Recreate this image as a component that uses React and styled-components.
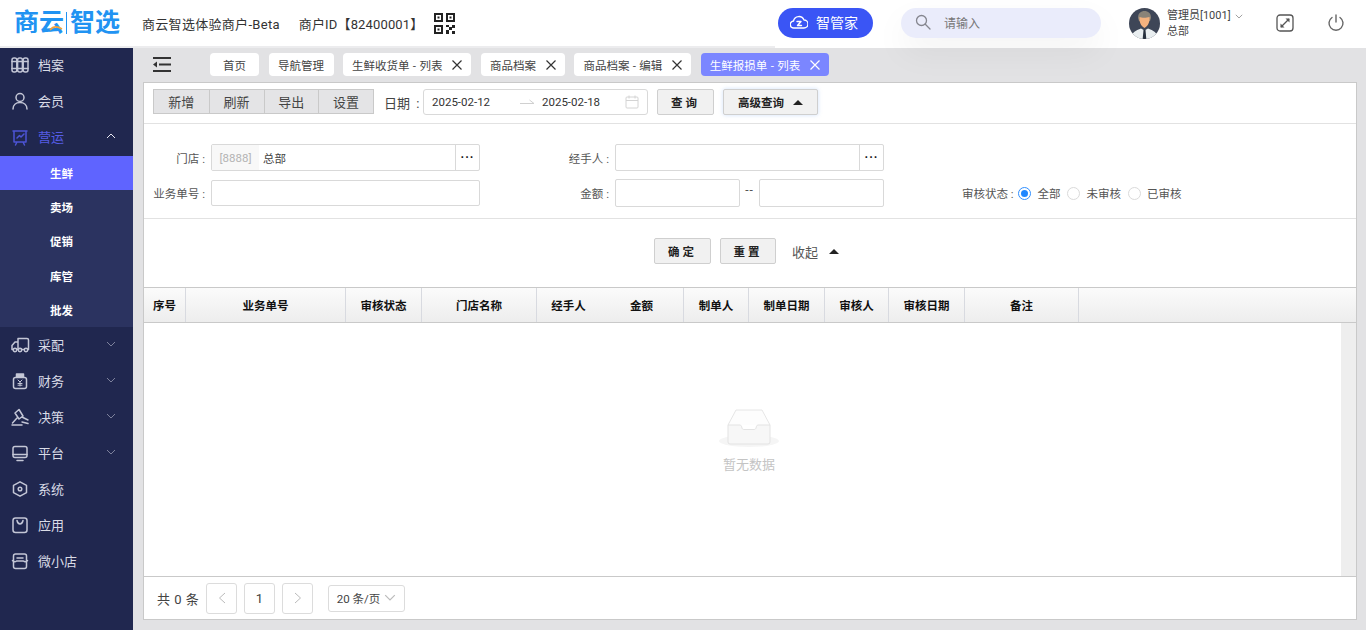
import React from "react";
import styled, { createGlobalStyle } from "styled-components";

const Global = createGlobalStyle`
  html, body { margin: 0; padding: 0; height: 100%; background: #e2e2e4; }
  body { font-family: Roboto, "Noto Sans CJK SC", sans-serif; font-size: 12px; color: #333; overflow: hidden; }
  * { box-sizing: border-box; }
`;

const Page = styled.div`
  width: 1366px;
  height: 630px;
  display: flex;
  flex-direction: column;
  overflow: hidden;
`;

const Header = styled.header`
  height: 48px;
  flex: none;
  display: flex;
  background: #fff;
  position: relative;
  z-index: 2;
`;
const HeaderLeft = styled.div`
  width: 775px;
  flex: none;
  display: flex;
  align-items: center;
  padding-left: 14px;
  border-bottom: 2px solid #ececee;
  font-size: 13px;
  color: #333;
`;
const Logo = styled.div`
  width: 106px;
  position: relative;
  display: flex;
  align-items: center;
  font-size: 25px;
  line-height: 30px;
  font-weight: 700;
  color: #2193f2;
  white-space: nowrap;
`;
const LogoBar = styled.i`
  width: 1px;
  height: 22px;
  margin: 0 3px 0 2px;
  background: #2193f2;
`;
const LogoSwoosh = styled.svg`
  position: absolute;
  left: 35px;
  top: 17px;
`;
const HeaderText = styled.span`
  margin-left: ${(p) => p.$gap}px;
  letter-spacing: ${(p) => p.$ls}px;
  white-space: nowrap;
`;
const QrWrap = styled.div`
  margin-left: 11px;
  display: flex;
`;
const HeaderRight = styled.div`
  flex: 1;
  display: flex;
  align-items: center;
  padding: 0 0 2px 3px;
`;
const SmartBtn = styled.div`
  width: 95px;
  height: 30px;
  border-radius: 15px;
  background: #3a55f5;
  color: #fff;
  font-size: 14px;
  display: flex;
  align-items: center;
  padding: 0 0 2px 12px;
  gap: 8px;
`;
const Search = styled.div`
  width: 200px;
  height: 30px;
  margin-left: 28px;
  border-radius: 15px;
  background: #eaecfb;
  color: #777;
  display: flex;
  align-items: center;
  padding: 0 0 2px 14px;
  gap: 13px;
  box-shadow: 0 14px 34px rgba(0, 0, 0, 0.05);
`;
const AvatarWrap = styled.div`
  margin-left: 28px;
  display: flex;
`;
const UserInfo = styled.div`
  margin-left: 7px;
  width: 78px;
  padding-top: 2px;
  font-size: 11px;
  line-height: 16px;
  color: #444;
`;
const UserName = styled.div`
  display: flex;
  align-items: center;
  gap: 4px;
  white-space: nowrap;
`;
const HeaderIcon = styled.div`
  margin-left: ${(p) => p.$gap}px;
  display: flex;
`;

const Body = styled.div`
  flex: 1;
  display: flex;
  min-height: 0;
`;
const Sidebar = styled.nav`
  width: 133px;
  flex: none;
  background: #20274f;
`;
const NavRow = styled.div`
  height: 36px;
  display: flex;
  align-items: center;
  padding: 0 17px ${(p) => (p.$low ? 2 : 4)}px 10px;
  font-size: 13px;
  color: ${(p) => (p.$active ? "#565de6" : "#d9dbe6")};
`;
const NavIcon = styled.span`
  width: 20px;
  height: 20px;
  display: flex;
  align-items: center;
  justify-content: center;
  margin-right: 8px;
  margin-top: 2px;
  color: ${(p) => (p.$active ? "#4c54d6" : "#c3c6d6")};
`;
const NavLabel = styled.span`
  flex: 1;
`;
const SubMenu = styled.div`
  background: #2b3360;
  height: 171px;
`;
const SubRow = styled.div`
  height: 34.2px;
  display: flex;
  align-items: center;
  padding-left: 50px;
  font-size: 11.5px;
  font-weight: 700;
  color: #fff;
  background: ${(p) => (p.$active ? "#5f64ff" : "transparent")};
`;

const Content = styled.main`
  flex: 1;
  min-width: 0;
  display: flex;
  flex-direction: column;
  padding: 5px 9px 10px 10px;
`;
const TabBar = styled.div`
  height: 23px;
  flex: none;
  display: flex;
  align-items: center;
  gap: 9.5px;
  margin-bottom: 6px;
`;
const Collapse = styled.div`
  width: 58px;
  padding-left: 10px;
  margin-right: -0.5px;
  display: flex;
`;
const Tab = styled.div`
  height: 23px;
  ${(p) => (p.$width ? `width: ${p.$width}px; justify-content: center;` : "padding: 0 9px;")}
  border-radius: 4px;
  background: ${(p) => (p.$active ? "#7b86ff" : "#fff")};
  color: ${(p) => (p.$active ? "#fff" : "#444")};
  font-size: 11.5px;
  word-spacing: 0.5px;
  display: flex;
  align-items: center;
  white-space: nowrap;
  gap: 10px;
`;

const Panel = styled.section`
  flex: 1;
  min-height: 0;
  display: flex;
  flex-direction: column;
  background: #fff;
  border: 1px solid #c9c9c9;
`;
const Toolbar = styled.div`
  height: 41px;
  flex: none;
  display: flex;
  align-items: center;
  padding: 0 0 2px 9px;
  border-bottom: 1px solid #e2e2e2;
`;
const BtnGroup = styled.div`
  display: flex;
  height: 25px;
  margin-bottom: 1px;
  border: 1px solid #c9c9c9;
  background: #e4e4e6;
`;
const GroupBtn = styled.div`
  width: 54.75px;
  display: flex;
  align-items: center;
  justify-content: center;
  font-size: 13px;
  color: #444;
  & + & { border-left: 1px solid #c9c9c9; }
`;
const DateLabel = styled.span`
  font-size: 13px;
  margin-left: 10px;
  width: 39px;
  color: #444;
  word-spacing: 3px;
  white-space: nowrap;
`;
const DateRange = styled.div`
  width: 225px;
  height: 26px;
  border: 1px solid #d9d9d9;
  border-radius: 3px;
  display: flex;
  align-items: center;
  padding: 0 8px;
  font-size: 11.5px;
  color: #333;
`;
const DateValue = styled.span`
  width: 88px;
`;
const ArrowBox = styled.span`
  width: 22px;
  display: flex;
`;
const DateEnd = styled.span`
  flex: 1;
`;
const ActionBtn = styled.div`
  height: ${(p) => p.$h || 26}px;
  width: ${(p) => p.$w}px;
  margin-left: ${(p) => p.$gap}px;
  border: 1px solid #cfcfcf;
  border-radius: 2px;
  background: #f1f1f1;
  display: flex;
  align-items: center;
  justify-content: center;
  gap: 9px;
  font-size: 11.5px;
  font-weight: 700;
  color: #222;
  letter-spacing: ${(p) => (p.$spaced ? "3px" : "0")};
  box-shadow: ${(p) => (p.$glow ? "0 0 4px rgba(120,170,240,.35)" : "none")};
`;
const Triangle = styled.i`
  width: 0;
  height: 0;
  border-left: 5px solid transparent;
  border-right: 5px solid transparent;
  border-bottom: 5px solid #222;
`;

const FilterGrid = styled.div`
  flex: none;
  height: 95px;
  padding-top: 20px;
  display: grid;
  grid-template-columns: 67px 269px 135px 269px 1fr;
  grid-template-rows: 27px 28px;
  row-gap: 8px;
  border-bottom: 1px solid #e2e2e2;
`;
const Label = styled.label`
  display: flex;
  align-items: center;
  justify-content: flex-end;
  padding-right: 6px;
  font-size: 11.5px;
  color: #555;
  white-space: nowrap;
`;
const Input = styled.div`
  height: ${(p) => p.$h || 27}px;
  align-self: center;
  width: ${(p) => (p.$w ? `${p.$w}px` : "100%")};
  border: 1px solid #d9d9d9;
  border-radius: 2px;
  background: #fff;
  display: flex;
  overflow: hidden;
`;
const Prefix = styled.span`
  width: 47px;
  background: #f8f8f8;
  color: #b4b4b4;
  font-size: 11.5px;
  display: flex;
  align-items: center;
  justify-content: center;
`;
const InputValue = styled.span`
  flex: 1;
  display: flex;
  align-items: center;
  padding-left: 4px;
  font-size: 11.5px;
  color: #444;
`;
const Dots = styled.span`
  width: 24px;
  border-left: 1px solid #d9d9d9;
  display: flex;
  align-items: center;
  justify-content: center;
  font-weight: 700;
  font-size: 12px;
  letter-spacing: 1px;
  color: #111;
`;
const RangeCell = styled.div`
  display: flex;
  align-items: center;
`;
const RangeSep = styled.span`
  width: 19px;
  text-align: center;
  font-size: 12px;
  letter-spacing: 1px;
  color: #555;
  margin-bottom: 6px;
`;
const StatusCell = styled.div`
  display: flex;
  align-items: center;
  padding-left: 78px;
  font-size: 11.5px;
  color: #555;
  white-space: nowrap;
`;
const StatusLabel = styled.span`
  width: 56px;
`;
const Radio = styled.i`
  width: 13px;
  height: 13px;
  flex: none;
  border-radius: 50%;
  border: 1px solid ${(p) => (p.$on ? "#2f8fff" : "#dadada")};
  background: #fff;
  display: flex;
  align-items: center;
  justify-content: center;
  &::after {
    content: "";
    display: ${(p) => (p.$on ? "block" : "none")};
    width: 7px;
    height: 7px;
    border-radius: 50%;
    background: #1f87ff;
  }
`;
const RadioText = styled.span`
  margin-left: 6.5px;
  margin-right: 6.5px;
`;

const Actions = styled.div`
  flex: none;
  height: 68px;
  display: flex;
  align-items: flex-start;
  padding: 19px 0 0 510px;
`;
const CollapseText = styled.div`
  margin-left: 16px;
  height: 26px;
  display: flex;
  align-items: center;
  gap: 11px;
  font-size: 13px;
  color: #555;
`;

const TableHead = styled.div`
  flex: none;
  height: 36px;
  display: grid;
  grid-template-columns: 42px 160px 76px 115px 63px 84px 65px 76px 64px 76px 114px 1fr;
  border-top: 1px solid #c9c9c9;
  border-bottom: 1px solid #c9c9c9;
  background: linear-gradient(#fbfbfb, #ededed);
`;
const HeadCell = styled.div`
  display: flex;
  align-items: center;
  justify-content: center;
  font-size: 11.5px;
  font-weight: 700;
  color: #111;
  border-right: ${(p) => (p.$plain ? "none" : "1px solid #d8dae0")};
`;
const TableBody = styled.div`
  flex: 1;
  min-height: 0;
  position: relative;
  display: flex;
  flex-direction: column;
  align-items: center;
  padding: 86px 2px 0 0;
  border-bottom: 1px solid #c9c9c9;
`;
const ScrollTrack = styled.div`
  position: absolute;
  top: 0;
  right: 0;
  bottom: 0;
  width: 15px;
  background: #eeeeee;
`;
const EmptyText = styled.div`
  margin-top: 7px;
  font-size: 13px;
  color: #c4c4c4;
`;
const Footer = styled.div`
  flex: none;
  height: 42px;
  display: flex;
  align-items: center;
  padding-left: 13px;
`;
const Total = styled.span`
  font-size: 13px;
  color: #444;
  width: 49px;
  word-spacing: 1px;
  white-space: nowrap;
`;
const PageBtn = styled.div`
  width: 31px;
  height: 31px;
  margin-right: 7px;
  border: 1px solid #dcdcdc;
  border-radius: 3px;
  display: flex;
  align-items: center;
  justify-content: center;
  font-size: 13px;
  color: #444;
`;
const PageSize = styled.div`
  width: 77px;
  height: 27px;
  margin-left: 8px;
  border: 1px solid #dcdcdc;
  border-radius: 3px;
  display: flex;
  align-items: center;
  justify-content: center;
  gap: 4px;
  font-size: 11.5px;
  color: #444;
`;

const Svg = ({ s = 20, children }) => (
  <svg width={s} height={s} viewBox={`0 0 ${s} ${s}`} fill="none" stroke="currentColor" strokeWidth={1.5} strokeLinecap="round" strokeLinejoin="round">
    {children}
  </svg>
);

const icons = {
  archive: (
    <Svg>
      <rect x="2" y="3" width="4.800" height="14" rx="2" />
      <rect x="7.600" y="3" width="4.800" height="14" rx="2" />
      <rect x="13.200" y="3" width="4.800" height="14" rx="2" />
      <path d="M2 6.500h4.800M7.600 6.500h4.800M13.200 6.500h4.800M2 13.500h4.800M7.600 13.500h4.800M13.200 13.500h4.800" />
    </Svg>
  ),
  user: (
    <Svg>
      <circle cx="10" cy="6.500" r="4" />
      <path d="M3 18c0-4 3-6.500 7-6.500s7 2.500 7 6.500" />
    </Svg>
  ),
  ops: (
    <Svg>
      <path d="M3 4h14M4 4v11h12V4M7 15l-1.500 3M13 15l1.500 3" />
      <path d="M7 11l2.500-2.500 1.500 1.500L14 7" />
    </Svg>
  ),
  truck: (
    <Svg>
      <path d="M8 3.500h9a1.500 1.500 0 0 1 1.500 1.500v9.500H18M8 3.500V14M8 7H5L2 10.500v4h1M7 14.500h1.500M11.500 14.500H14" />
      <circle cx="5" cy="15" r="1.700" />
      <circle cx="10" cy="15" r="1.700" />
      <circle cx="16" cy="15" r="1.700" />
    </Svg>
  ),
  finance: (
    <Svg>
      <path d="M6.500 3h7v3h-7z" fill="currentColor" />
      <rect x="3.500" y="6.500" width="13" height="11" rx="2" />
      <path d="M8 9l2 2 2-2M10 11v4M8 12.500h4M8 14.200h4" strokeWidth="1" />
    </Svg>
  ),
  gavel: (
    <Svg>
      <path d="M9 2.500l4 6.500-4 3-4-6zM7 11l-4.500 5M12 10l6 3" />
      <path d="M2 18h10" />
      <path d="M12 15l6 1.500" />
    </Svg>
  ),
  monitor: (
    <Svg>
      <rect x="3" y="3.500" width="14" height="11" rx="2" />
      <path d="M3 11.500h14M7 17.500h6" />
    </Svg>
  ),
  system: (
    <Svg>
      <path d="M10 2.800l6.500 3.600v7.200L10 17.200 3.500 13.600V6.400z" />
      <circle cx="10" cy="10" r="1.800" />
    </Svg>
  ),
  app: (
    <Svg>
      <rect x="3" y="3" width="14" height="14.500" rx="2.500" />
      <path d="M7 5.500c.5 2.500 1.500 3.500 3 3.500s2.500-1 3-3.500" />
    </Svg>
  ),
  shop: (
    <Svg>
      <rect x="3.500" y="3" width="13" height="14.500" rx="2" />
      <path d="M2.500 9.500c1.500 1.500 3 1.500 4 .5h7c1 1 2.500 1 4-.5M7 7h6" />
    </Svg>
  ),
};

const Chevron = ({ up, color = "#7d819c", s = 10 }) => (
  <svg width={s} height={s * 0.6} viewBox="0 0 10 6" fill="none" stroke={color} strokeWidth="1">
    <path d={up ? "M1 5l4-4 4 4" : "M1 1l4 4 4-4"} />
  </svg>
);

const Close = ({ color = "#333" }) => (
  <svg width="10" height="10" viewBox="0 0 10 10" stroke={color} strokeWidth="1.200" fill="none">
    <path d="M.5.5l9 9M9.500.5l-9 9" />
  </svg>
);

const Qr = () => (
  <svg width="21" height="21" viewBox="0 0 21 21" fill="#222">
    <path fillRule="evenodd" d="M0 0h9v9H0zM2 2v5h5V2zM12 0h9v9h-9zM14 2v5h5V2zM0 12h9v9H0zM2 14v5h5v-5z" />
    <path d="M3.500 3.500h2v2h-2zM15.500 3.500h2v2h-2zM3.500 15.500h2v2h-2zM12 12h3v2h-3zM18 12h3v3h-3zM15 14h3v3h-3zM12 17h3v4h-3zM18 18h3v3h-3z" />
  </svg>
);

const Avatar = () => (
  <svg width="31" height="31" viewBox="0 0 31 31">
    <defs>
      <clipPath id="avatarClip"><circle cx="15.500" cy="15.500" r="15.500" /></clipPath>
    </defs>
    <g clipPath="url(#avatarClip)">
      <rect width="31" height="31" fill="#3e4657" />
      <path d="M9 10c0-5 3-7 6.500-7S22 5 22 10l-1 3H10z" fill="#8a8378" />
      <path d="M10.500 9c2 1 7 1 10 0 .5 4-1 9-5 11-4-2-5.500-7-5-11z" fill="#f4b27f" />
      <path d="M2 31c0-6 5-9 10-10.500l3.500 2 3.500-2C24 22 29 25 29 31z" fill="#e9eef0" />
      <path d="M14.500 22h2l.8 9h-3.600z" fill="#27303e" />
    </g>
  </svg>
);

const EmptyIcon = () => (
  <svg width="60" height="38" viewBox="0 0 60 38">
    <ellipse cx="30" cy="32" rx="30" ry="6" fill="#f5f5f5" />
    <path d="M9 16L17 1h26l8 15" fill="#fdfdfd" stroke="#e6e6e6" />
    <path d="M9 16h12c1 0 1.500 1 2 3 .3 1 1 1.500 2 1.500h10c1 0 1.700-.5 2-1.500.5-2 1-3 2-3h12v17a2 2 0 0 1-2 2H11a2 2 0 0 1-2-2z" fill="#f7f7f7" stroke="#e3e3e3" />
  </svg>
);

const navTop = [
  ["archive", "档案"],
  ["user", "会员"],
];
const subs = ["生鲜", "卖场", "促销", "库管", "批发"];
const navBottom = [
  ["truck", "采配", true],
  ["finance", "财务", true],
  ["gavel", "决策", true],
  ["monitor", "平台", true],
  ["system", "系统"],
  ["app", "应用"],
  ["shop", "微小店"],
];
const tabs = [
  { t: "首页", w: 49 },
  { t: "导航管理", w: 65 },
  { t: "生鲜收货单 - 列表", c: 1 },
  { t: "商品档案", c: 1 },
  { t: "商品档案 - 编辑", c: 1 },
  { t: "生鲜报损单 - 列表", c: 1, a: 1 },
];
const columns = ["序号", "业务单号", "审核状态", "门店名称", "经手人", "金额", "制单人", "制单日期", "审核人", "审核日期", "备注", ""];

export default function App() {
  return (
    <Page>
      <Global />
      <Header>
        <HeaderLeft>
          <Logo>
            商云<LogoBar />智选
            <LogoSwoosh width="14" height="6" viewBox="0 0 14 6" fill="none" stroke="#f2a33a" strokeWidth="1.500">
              <path d="M1 5c3-4 7-4 12-1" />
            </LogoSwoosh>
          </Logo>
          <HeaderText $gap={22} $ls={0.3}>商云智选体验商户-Beta</HeaderText>
          <HeaderText $gap={19} $ls={0.15}>商户ID【82400001】</HeaderText>
          <QrWrap><Qr /></QrWrap>
        </HeaderLeft>
        <HeaderRight>
          <SmartBtn>
            <svg width="18" height="14" viewBox="0 0 18 14" fill="none" stroke="#fff" strokeWidth="1.400" strokeLinejoin="round" strokeLinecap="round">
              <path d="M5 13H4a3.500 3.500 0 0 1-.5-7A5.500 5.500 0 0 1 14 5a4 4 0 0 1 0 8H5z" />
              <path d="M7 6.500h4L7.500 10.500h4" />
            </svg>
            智管家
          </SmartBtn>
          <Search>
            <svg width="16" height="16" viewBox="0 0 16 16" fill="none" stroke="#85868f" strokeWidth="1.300" strokeLinecap="round">
              <circle cx="6.500" cy="6.500" r="5" />
              <path d="M10.300 10.300L15 15" />
            </svg>
            请输入
          </Search>
          <AvatarWrap><Avatar /></AvatarWrap>
          <UserInfo>
            <UserName>管理员[1001] <Chevron color="#888" s={8} /></UserName>
            <div>总部</div>
          </UserInfo>
          <HeaderIcon $gap={31}>
            <svg width="18" height="18" viewBox="0 0 18 18" fill="none" stroke="#555" strokeWidth="1.300">
              <rect x="1" y="1" width="16" height="16" rx="3" />
              <path d="M5 13l8-8" strokeWidth="1.200" />
              <path d="M9.500 4.500h4v4zM4.500 9.500v4h4z" fill="#555" stroke="none" />
            </svg>
          </HeaderIcon>
          <HeaderIcon $gap={33}>
            <svg width="18" height="18" viewBox="0 0 18 18" fill="none" stroke="#666" strokeWidth="1.400" strokeLinecap="round">
              <path d="M5 3.500a7 7 0 1 0 8 0M9 1v7" />
            </svg>
          </HeaderIcon>
        </HeaderRight>
      </Header>
      <Body>
        <Sidebar>
          {navTop.map(([i, t]) => (
            <NavRow key={t}>
              <NavIcon>{icons[i]}</NavIcon>
              <NavLabel>{t}</NavLabel>
            </NavRow>
          ))}
          <NavRow $active>
            <NavIcon $active>{icons.ops}</NavIcon>
            <NavLabel>营运</NavLabel>
            <Chevron up color="#e8e8f0" />
          </NavRow>
          <SubMenu>
            {subs.map((s, i) => (
              <SubRow key={s} $active={i === 0}>{s}</SubRow>
            ))}
          </SubMenu>
          {navBottom.map(([i, t, more]) => (
            <NavRow key={t} $low>
              <NavIcon>{icons[i]}</NavIcon>
              <NavLabel>{t}</NavLabel>
              {more && <Chevron />}
            </NavRow>
          ))}
        </Sidebar>
        <Content>
          <TabBar>
            <Collapse>
              <svg width="18" height="15" viewBox="0 0 18 15" fill="#333">
                <path d="M0 7.500L4 4.500v6z" />
                <path d="M0 0h18v2H0zM6 6.500h12v2H6zM0 13h18v2H0z" />
              </svg>
            </Collapse>
            {tabs.map((t) => (
              <Tab key={t.t} $width={t.w} $active={t.a}>
                {t.t}
                {t.c && <Close color={t.a ? "#fff" : "#333"} />}
              </Tab>
            ))}
          </TabBar>
          <Panel>
            <Toolbar>
              <BtnGroup>
                {["新增", "刷新", "导出", "设置"].map((b) => (
                  <GroupBtn key={b}>{b}</GroupBtn>
                ))}
              </BtnGroup>
              <DateLabel>日期 :</DateLabel>
              <DateRange>
                <DateValue>2025-02-12</DateValue>
                <ArrowBox>
                  <svg width="15" height="7" viewBox="0 0 15 7" fill="none" stroke="#d0d0d0">
                    <path d="M0 4.500h14L9.500 1" />
                  </svg>
                </ArrowBox>
                <DateEnd>2025-02-18</DateEnd>
                <svg width="14" height="14" viewBox="0 0 14 14" fill="none" stroke="#d4d4d4">
                  <rect x="1" y="2" width="12" height="11" rx="1" />
                  <path d="M1 5.500h12M4 .5v3M10 .5v3" />
                </svg>
              </DateRange>
              <ActionBtn $w={57} $gap={9} $spaced>查询</ActionBtn>
              <ActionBtn $w={95} $gap={9} $glow>高级查询 <Triangle /></ActionBtn>
            </Toolbar>
            <FilterGrid>
              <Label>门店 :</Label>
              <Input>
                <Prefix>[8888]</Prefix>
                <InputValue>总部</InputValue>
                <Dots>···</Dots>
              </Input>
              <Label>经手人 :</Label>
              <Input>
                <InputValue />
                <Dots>···</Dots>
              </Input>
              <span />
              <Label>业务单号 :</Label>
              <Input $h={26} />
              <Label>金额 :</Label>
              <RangeCell>
                <Input $w={125} $h={28} />
                <RangeSep>--</RangeSep>
                <Input $w={125} $h={28} />
              </RangeCell>
              <StatusCell>
                <StatusLabel>审核状态 :</StatusLabel>
                <Radio $on />
                <RadioText>全部</RadioText>
                <Radio />
                <RadioText>未审核</RadioText>
                <Radio />
                <RadioText>已审核</RadioText>
              </StatusCell>
            </FilterGrid>
            <Actions>
              <ActionBtn $w={57} $gap={0} $spaced>确定</ActionBtn>
              <ActionBtn $w={56} $gap={9} $spaced>重置</ActionBtn>
              <CollapseText>收起 <Triangle /></CollapseText>
            </Actions>
            <TableHead>
              {columns.map((c, i) => (
                <HeadCell key={i} $plain={c === "经手人" || c === ""}>{c}</HeadCell>
              ))}
            </TableHead>
            <TableBody>
              <EmptyIcon />
              <EmptyText>暂无数据</EmptyText>
              <ScrollTrack />
            </TableBody>
            <Footer>
              <Total>共 0 条</Total>
              <PageBtn>
                <svg width="8" height="12" viewBox="0 0 8 12" fill="none" stroke="#bbb"><path d="M7 1L1.500 6 7 11" /></svg>
              </PageBtn>
              <PageBtn>1</PageBtn>
              <PageBtn>
                <svg width="8" height="12" viewBox="0 0 8 12" fill="none" stroke="#bbb"><path d="M1 1l5.500 5L1 11" /></svg>
              </PageBtn>
              <PageSize>20 条/页 <Chevron color="#bbb" s={12} /></PageSize>
            </Footer>
          </Panel>
        </Content>
      </Body>
    </Page>
  );
}
